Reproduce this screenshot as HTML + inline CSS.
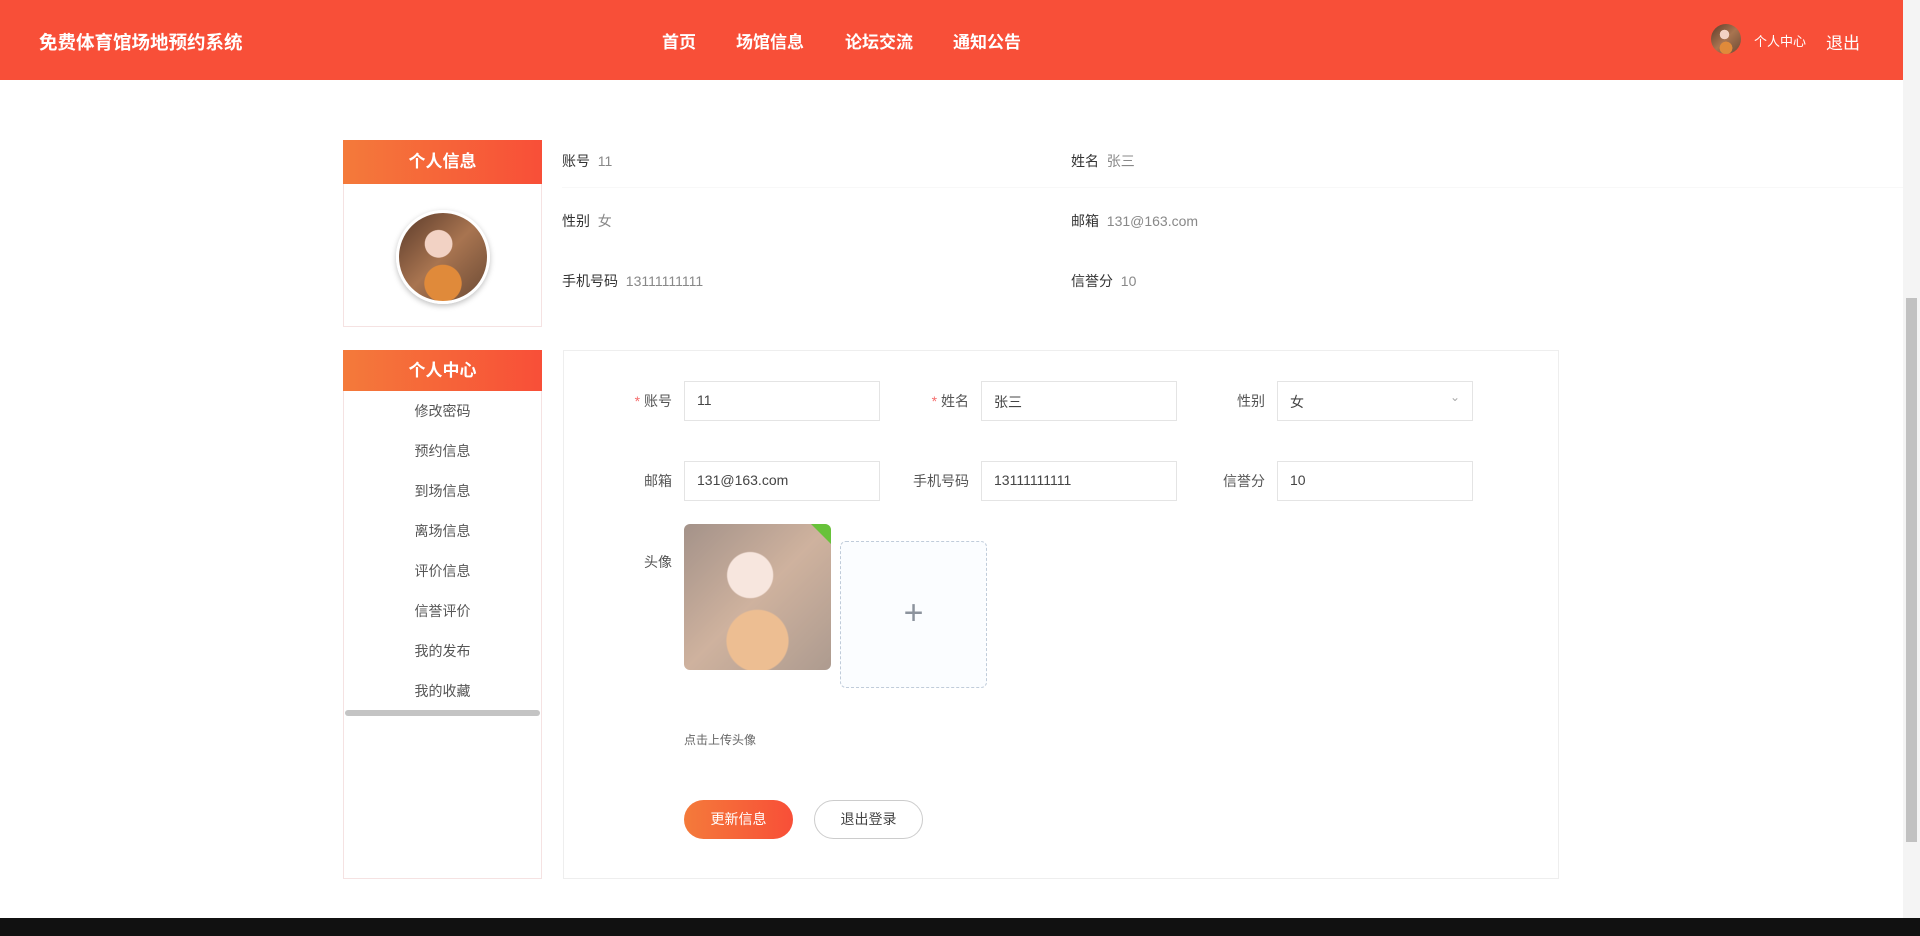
<!DOCTYPE html>
<html><head><meta charset="utf-8">
<style>
*{box-sizing:border-box;margin:0;padding:0}
body{width:1920px;height:936px;overflow:hidden;background:#fff;font-family:"Liberation Sans","Noto Sans CJK SC",sans-serif;position:relative;color:#333}
.abs{position:absolute}
.hdr{left:0;top:0;width:1903px;height:80px;background:#f84f38}
.hdr .t{left:39px;top:29px;color:#fff;font-size:18.5px;font-weight:bold}
.nav{top:28px;color:#fff;font-size:17px;font-weight:bold}
.sb{left:1903px;top:0;width:17px;height:918px;background:#f4f4f4}
.thumb{left:1906px;top:298px;width:11px;height:544px;background:#c1c1c1}
.bb{left:0;top:918px;width:1920px;height:18px;background:#111}
.ph{background:radial-gradient(circle at 45% 35%,#f2d2c4 0 18%,transparent 19%),radial-gradient(circle at 50% 80%,#e08a3a 0 22%,transparent 23%),linear-gradient(135deg,#5a3a2a,#a87450 50%,#6b4a35)}
.gh{background:linear-gradient(90deg,#f47a3a,#f84f38);color:#fff;font-weight:bold;font-size:17px;text-align:center}
.mi{left:343px;width:199px;text-align:center;font-size:14px;color:#555}
.lab{font-size:14px;color:#333}
.val{font-size:14px;color:#888}
.inp{height:40px;border:1px solid #e4e4e4;font-size:14px;color:#444;padding:10px 12px;width:196px}
.fl{font-size:14px;color:#555;text-align:right;width:100px}
</style></head><body>
<div class="abs hdr">
<div class="abs t">免费体育馆场地预约系统</div>
<div class="abs nav" style="left:662px">首页</div>
<div class="abs nav" style="left:736px">场馆信息</div>
<div class="abs nav" style="left:845px">论坛交流</div>
<div class="abs nav" style="left:953px">通知公告</div>
<div class="abs ph" style="left:1711px;top:24px;width:30px;height:30px;border-radius:50%"></div>
<div class="abs" style="left:1754px;top:31px;color:#fff;font-size:13px">个人中心</div>
<div class="abs" style="left:1826px;top:29px;color:#fff;font-size:17px">退出</div>
</div>
<div class="abs sb"></div><div class="abs thumb"></div><div class="abs bb"></div>

<div class="abs gh" style="left:343px;top:140px;width:199px;height:44px;line-height:44px">个人信息</div>
<div class="abs" style="left:343px;top:184px;width:199px;height:143px;border:1px solid #f5e2e2;border-top:none"></div>
<div class="abs ph" style="left:396px;top:210px;width:94px;height:94px;border-radius:50%;border:3px solid #fff;box-shadow:0 2px 6px rgba(0,0,0,.25)"></div>

<div class="abs gh" style="left:343px;top:350px;width:199px;height:41px;line-height:41px">个人中心</div>
<div class="abs" style="left:343px;top:391px;width:199px;height:488px;border:1px solid #f5e2e2;border-top:none"></div>
<div class="abs mi" style="top:401px">修改密码</div>
<div class="abs mi" style="top:441px">预约信息</div>
<div class="abs mi" style="top:481px">到场信息</div>
<div class="abs mi" style="top:521px">离场信息</div>
<div class="abs mi" style="top:561px">评价信息</div>
<div class="abs mi" style="top:601px">信誉评价</div>
<div class="abs mi" style="top:641px">我的发布</div>
<div class="abs mi" style="top:681px">我的收藏</div>
<div class="abs" style="left:345px;top:710px;width:195px;height:6px;background:#c4c4c4;border-radius:3px"></div>

<div class="abs" style="left:562px;top:187px;width:1341px;height:1px;background:#f8f8f8"></div>
<div class="abs lab" style="left:562px;top:151px">账号 <span class="val">&nbsp;11</span></div>
<div class="abs lab" style="left:1071px;top:151px">姓名 <span class="val">&nbsp;张三</span></div>
<div class="abs lab" style="left:562px;top:211px">性别 <span class="val">&nbsp;女</span></div>
<div class="abs lab" style="left:1071px;top:211px">邮箱 <span class="val">&nbsp;131@163.com</span></div>
<div class="abs lab" style="left:562px;top:271px">手机号码 <span class="val">&nbsp;13111111111</span></div>
<div class="abs lab" style="left:1071px;top:271px">信誉分 <span class="val">&nbsp;10</span></div>

<div class="abs" style="left:563px;top:350px;width:996px;height:529px;border:1px solid #eee"></div>
<div class="abs fl" style="left:572px;top:391px"><span style="color:#f56c6c">* </span>账号</div>
<div class="abs inp" style="left:684px;top:381px">11</div>
<div class="abs fl" style="left:869px;top:391px"><span style="color:#f56c6c">* </span>姓名</div>
<div class="abs inp" style="left:981px;top:381px">张三</div>
<div class="abs fl" style="left:1165px;top:391px">性别</div>
<div class="abs inp" style="left:1277px;top:381px">女<span style="position:absolute;right:12px;top:8px;color:#aaa;font-size:12px">&#8964;</span></div>
<div class="abs fl" style="left:572px;top:471px">邮箱</div>
<div class="abs inp" style="left:684px;top:461px">131@163.com</div>
<div class="abs fl" style="left:869px;top:471px">手机号码</div>
<div class="abs inp" style="left:981px;top:461px">13111111111</div>
<div class="abs fl" style="left:1165px;top:471px">信誉分</div>
<div class="abs inp" style="left:1277px;top:461px">10</div>
<div class="abs fl" style="left:572px;top:552px">头像</div>
<div class="abs ph" style="left:684px;top:524px;width:147px;height:146px;border-radius:6px;opacity:.55"></div>
<div class="abs" style="left:811px;top:524px;width:20px;height:20px;background:#67c23a;clip-path:polygon(0 0,100% 0,100% 100%);border-top-right-radius:6px"></div>
<div class="abs" style="left:840px;top:541px;width:147px;height:147px;border:1px dashed #c0ccda;border-radius:6px;background:#fbfdff;color:#8c939d;font-size:34px;font-weight:200;text-align:center;line-height:143px">+</div>
<div class="abs" style="left:684px;top:731px;font-size:12px;color:#666">点击上传头像</div>
<div class="abs" style="left:684px;top:800px;width:109px;height:39px;border-radius:20px;background:linear-gradient(90deg,#f47a3a,#f84f38);color:#fff;font-size:14px;text-align:center;line-height:39px">更新信息</div>
<div class="abs" style="left:814px;top:800px;width:109px;height:39px;border-radius:20px;border:1px solid #ccc;color:#444;font-size:14px;text-align:center;line-height:37px">退出登录</div>
</body></html>
